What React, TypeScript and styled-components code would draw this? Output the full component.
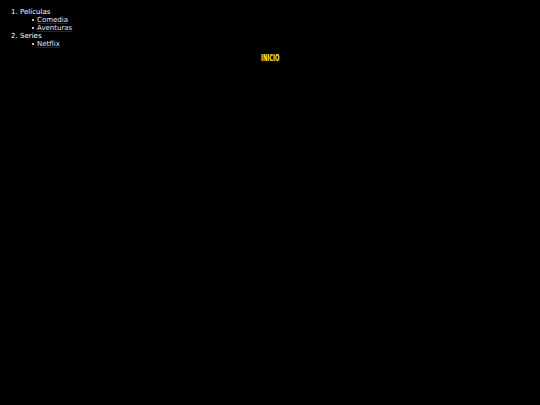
import React from 'react';
import styled, { createGlobalStyle } from 'styled-components';

const GlobalStyle = createGlobalStyle`
  html, body {
    background: #000;
  }
  body {
    margin: 8px;
    font-family: 'DejaVu Sans', sans-serif;
    color: #fff;
  }
`;

const Menu = styled.ol`
  margin: 0;
  padding-left: 12px;
  font-size: 7px;
  line-height: 8px;
`;

const SubMenu = styled.ul`
  margin: 0;
  padding-left: 17px;
  list-style: none;
`;

const SubItem = styled.li`
  &::before {
    content: '';
    display: inline-block;
    width: 2px;
    height: 2px;
    margin-left: -5px;
    margin-right: 3px;
    vertical-align: 1px;
    border-radius: 50%;
    background: #fff;
  }
`;

const SubLink = styled.a`
  color: #e4e4ff;
  text-decoration: underline;
  text-decoration-color: #1a1a80;
`;

const Title = styled.h1`
  margin: 7px 0 0;
  text-align: center;
  font-size: 8px;
  line-height: 8px;
  font-weight: bold;
  color: #ffff00;

  span {
    display: inline-block;
    transform: scaleX(0.65);
  }
`;

const sections = [
  { name: 'Películas', items: ['Comedia', 'Aventuras'] },
  { name: 'Series', items: ['Netflix'] },
];

const App = () => {
  return (
    <>
      <GlobalStyle />
      <nav>
        <Menu>
          {sections.map((section) => (
            <li key={section.name}>
              {section.name}
              <SubMenu>
                {section.items.map((item) => (
                  <SubItem key={item}>
                    <SubLink href="#">{item}</SubLink>
                  </SubItem>
                ))}
              </SubMenu>
            </li>
          ))}
        </Menu>
      </nav>
      <Title>
        <span>INICIO</span>
      </Title>
    </>
  );
};

export default App;
